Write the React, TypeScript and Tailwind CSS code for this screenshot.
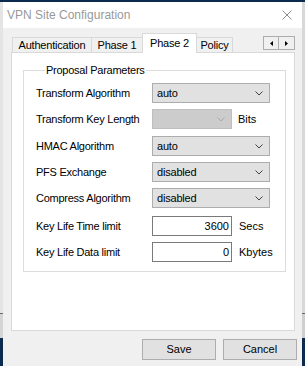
import React from 'react';

const font = { fontFamily: '"Liberation Sans", Arial, sans-serif' };

const Chevron: React.FC<{ disabled?: boolean }> = ({ disabled }) => (
  <svg width="8" height="5" viewBox="0 0 8 5" className="shrink-0">
    <path d="M0.5 0.5 L4 4 L7.5 0.5" fill="none" stroke={disabled ? '#a8a8a8' : '#404040'} strokeWidth="1" />
  </svg>
);

const Select: React.FC<{ value: string }> = ({ value }) => (
  <div className="flex items-center justify-between w-[118px] h-[20px] bg-[#e1e1e1] border border-[#adadad] pl-[4px] pr-[6px]">
    <span className="text-[11px] tracking-[-0.2px] text-black">{value}</span>
    <Chevron />
  </div>
);

const Row: React.FC<{ label: string; className?: string; children: React.ReactNode }> = ({ label, className, children }) => (
  <div className={`flex items-center h-[20px] ${className ?? ''}`}>
    <span className="w-[116px] text-[11px] tracking-[-0.25px] text-black">{label}</span>
    {children}
  </div>
);

export default function App() {
  return (
    <div className="w-[305px] h-[366px] flex flex-col bg-[#0c2a4d] overflow-hidden" style={font}>
      {/* top strip of desktop */}
      <div className="h-[2px] bg-[#0c2a4d]" />
      <div className="flex flex-1">
        {/* left strip: window behind */}
        <div className="w-[3px] flex flex-col">
          <div className="h-[311px] bg-[#e4e4e4]" />
          <div className="h-[1px] bg-[#6a6a6a]" />
          <div className="h-[24px] bg-[#d4d4d4]" />
          <div className="flex-1 bg-[#0c2a4d]" />
        </div>

        {/* dialog */}
        <div className="w-[299px] flex flex-col">
          {/* title bar */}
          <div className="h-[26px] bg-white flex items-center justify-between pl-[4px] pr-[10px]">
            <span className="text-[12px] text-[#999999]">VPN Site Configuration</span>
            <svg width="10" height="10" viewBox="0 0 10 10">
              <path d="M0.5 0.5 L9.5 9.5 M9.5 0.5 L0.5 9.5" stroke="#8c8c8c" strokeWidth="1" />
            </svg>
          </div>

          {/* body */}
          <div className="flex-1 bg-[#f0f0f0] flex flex-col pl-[8px] pr-[7px] pt-[5px]">
            {/* tabs */}
            <div className="flex items-end h-[20px] -mb-px relative z-10">
              <div className="ml-[1px] w-[80px] h-[15px] mb-px border-l border-t border-r border-[#d9d9d9] bg-[#f0f0f0] flex items-center justify-center text-[11px] tracking-[-0.2px] text-black">
                Authentication
              </div>
              <div className="w-[50px] h-[15px] mb-px border-t border-[#d9d9d9] bg-[#f0f0f0] flex items-center justify-center text-[11px] tracking-[-0.2px] text-black">
                Phase 1
              </div>
              <div className="w-[55px] h-[20px] border-l border-t border-r border-[#d9d9d9] bg-white flex items-center justify-center pb-[1px] text-[11px] tracking-[-0.2px] text-black">
                Phase 2
              </div>
              <div className="w-[36px] h-[15px] mb-px border-t border-r border-[#d9d9d9] bg-[#f0f0f0] flex items-center justify-center text-[11px] tracking-[-0.2px] text-black">
                Policy
              </div>
              <div className="ml-auto self-start mt-[3px] flex">
                <div className="w-[16px] h-[14px] border border-[#adadad] bg-[#f0f0f0] flex items-center justify-center">
                  <svg width="3" height="5" viewBox="0 0 3 5"><path d="M3 0 L0 2.5 L3 5 Z" fill="#000" /></svg>
                </div>
                <div className="w-[16px] h-[14px] border border-l-0 border-[#adadad] bg-[#f0f0f0] flex items-center justify-center">
                  <svg width="3" height="5" viewBox="0 0 3 5"><path d="M0 0 L3 2.5 L0 5 Z" fill="#000" /></svg>
                </div>
              </div>
            </div>

            {/* tab panel */}
            <div className="h-[279px] bg-white border border-[#d9d9d9] pl-[11px] pr-[10px] pt-[11px]">
              <fieldset className="border border-[#dcdcdc] pl-[12px] pr-[12px] pt-[6px] pb-[9px]">
                <legend className="ml-[9px] px-[1px] text-[11px] leading-[13px] tracking-[-0.25px] text-black">
                  Proposal Parameters
                </legend>
                <div className="flex flex-col gap-[6px]">
                  <Row label="Transform Algorithm">
                    <Select value="auto" />
                  </Row>
                  <Row label="Transform Key Length">
                    <div className="flex items-center justify-end w-[80px] h-[20px] bg-[#cccccc] border border-[#bfbfbf] pr-[6px]">
                      <Chevron disabled />
                    </div>
                    <span className="ml-[6px] text-[11px] text-black">Bits</span>
                  </Row>
                  <Row label="HMAC Algorithm" className="mt-[1px]">
                    <Select value="auto" />
                  </Row>
                  <Row label="PFS Exchange">
                    <Select value="disabled" />
                  </Row>
                  <Row label="Compress Algorithm">
                    <Select value="disabled" />
                  </Row>
                  <Row label="Key Life Time limit" className="mt-[2px]">
                    <div className="w-[80px] h-[20px] bg-white border border-[#7a7a7a] flex items-center justify-end pr-[2px] text-[11px] text-black">
                      3600
                    </div>
                    <span className="ml-[7px] text-[11px] text-black">Secs</span>
                  </Row>
                  <Row label="Key Life Data limit">
                    <div className="w-[80px] h-[20px] bg-white border border-[#7a7a7a] flex items-center justify-end pr-[2px] text-[11px] text-black">
                      0
                    </div>
                    <span className="ml-[7px] text-[11px] text-black">Kbytes</span>
                  </Row>
                </div>
              </fieldset>
            </div>

            {/* buttons */}
            <div className="flex justify-end gap-[7px] mt-[8px] -mr-[2px]">
              <button className="w-[74px] h-[21px] bg-[#e1e1e1] border border-[#adadad] text-[11px] text-black">Save</button>
              <button className="w-[74px] h-[21px] bg-[#e1e1e1] border border-[#adadad] text-[11px] text-black">Cancel</button>
            </div>
          </div>
        </div>

        {/* right strip */}
        <div className="w-[3px] flex flex-col">
          <div className="h-[311px] bg-[#d8d8d8]" />
          <div className="h-[1px] bg-[#6a6a6a]" />
          <div className="h-[24px] bg-[#cfcfcf]" />
          <div className="flex-1 bg-[#0c2a4d]" />
        </div>
      </div>
    </div>
  );
}
